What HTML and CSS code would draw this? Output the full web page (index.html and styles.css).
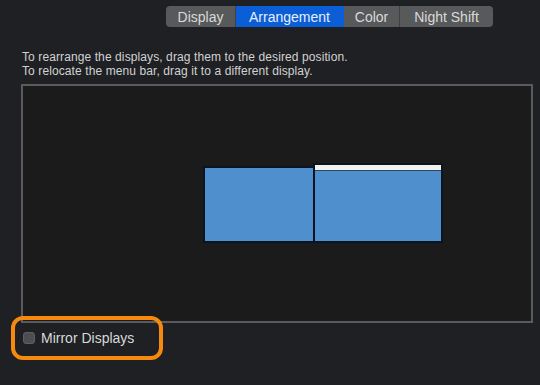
FILE: index.html
```html
<!DOCTYPE html>
<html>
<head>
<meta charset="utf-8">
<link rel="stylesheet" href="styles.css">
</head>
<body>
<div class="page">
  <div class="tabs">
    <div class="tab t-display">Display</div>
    <div class="tab t-arr active">Arrangement</div>
    <div class="tab t-color">Color</div>
    <div class="tab t-night">Night Shift</div>
  </div>
  <p class="info">To rearrange the displays, drag them to the desired position.<br>To relocate the menu bar, drag it to a different display.</p>
  <div class="canvas">
    <div class="screen s1"></div>
    <div class="screen s2"><div class="menubar"></div></div>
  </div>
  <div class="mirror">
    <span class="check"></span>
    <span class="label">Mirror Displays</span>
  </div>
  <div class="highlight"></div>
</div>
</body>
</html>
```
FILE: styles.css
```css
html, body {
  margin: 0;
  padding: 0;
  width: 540px;
  height: 385px;
  overflow: hidden;
  background: #1f2023;
  font-family: "Liberation Sans", Arial, sans-serif;
}
.page {
  position: relative;
  width: 540px;
  height: 385px;
  padding-top: 6px;
  box-sizing: border-box;
}
.tabs {
  display: flex;
  margin-left: 166px;
  width: 327px;
  height: 21px;
  border-radius: 4px;
  overflow: hidden;
  background: #58595b;
}
.tab {
  display: flex;
  align-items: center;
  justify-content: center;
  font-size: 14px;
  color: #d9d9d9;
  border-right: 1px solid #3f4042;
  box-sizing: border-box;
}
.tab:last-child { border-right: none; }
.t-display { width: 70px; }
.t-arr { width: 108px; }
.t-color { width: 56px; }
.t-night { flex: 1; }
.tab.active {
  background: #0b5ed6;
  color: #e6eefc;
  border-right-color: #0b5ed6;
}
.info {
  margin: 23px 0 0 22px;
  font-size: 12px;
  letter-spacing: 0.1px;
  line-height: 14px;
  color: #d2d2d2;
}
.canvas {
  position: relative;
  margin: 6px 0 0 21px;
  width: 512px;
  height: 239px;
  box-sizing: border-box;
  border: 2px solid #5b5b5d;
  background: #1b1b1b;
}
.screen {
  position: absolute;
  background: #4f8fce;
  border: 2px solid #0a1422;
  box-sizing: border-box;
}
.s1 { left: 180px; top: 80px; width: 112px; height: 77px; }
.s2 { left: 290px; top: 77px; width: 130px; height: 80px; }
.menubar {
  height: 5px;
  background: #f4f2ee;
  border-bottom: 1px solid #30445c;
}
.mirror {
  display: flex;
  align-items: center;
  gap: 6px;
  margin: 7px 0 0 23px;
}
.check {
  width: 12px;
  height: 12px;
  border-radius: 3px;
  background: #4d4e52;
  border: 1px solid #5e5f63;
  box-sizing: border-box;
}
.label {
  font-size: 14px;
  line-height: 16px;
  color: #d8d8d8;
}
.highlight {
  position: absolute;
  left: 11px;
  top: 316px;
  width: 152px;
  height: 44px;
  border: 4px solid #f68a0f;
  border-radius: 12px;
  box-sizing: border-box;
}
```
